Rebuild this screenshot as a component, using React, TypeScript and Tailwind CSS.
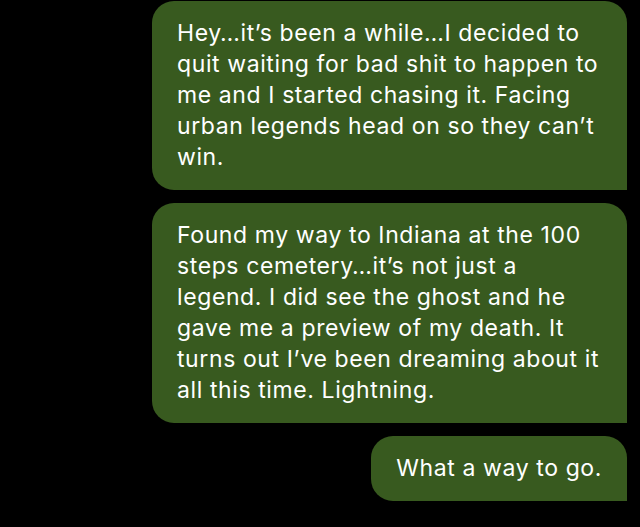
import React from 'react';

const messages: { id: number; lines: string[]; width: string }[] = [
  {
    id: 1,
    width: 'w-[475px]',
    lines: [
      'Hey…it’s been a while…I decided to',
      'quit waiting for bad shit to happen to',
      'me and I started chasing it. Facing',
      'urban legends head on so they can’t',
      'win.',
    ],
  },
  {
    id: 2,
    width: 'w-[475px]',
    lines: [
      'Found my way to Indiana at the 100',
      'steps cemetery…it’s not just a',
      'legend. I did see the ghost and he',
      'gave me a preview of my death. It',
      'turns out I’ve been dreaming about it',
      'all this time. Lightning.',
    ],
  },
  {
    id: 3,
    width: 'w-auto',
    lines: ['What a way to go.'],
  },
];

const App: React.FC = () => {
  return (
    <div className="min-h-[527px] w-[640px] bg-black pt-[1px] pr-[13px] font-['Inter','Noto_Sans',sans-serif]">
      <div className="flex flex-col items-end gap-[13px]">
        {messages.map((msg) => (
          <div
            key={msg.id}
            className={`${msg.width} rounded-[22px] rounded-br-none bg-[#385a1f] px-[25px] py-[17px] text-[23px] leading-[31px] tracking-[0.6px] text-white whitespace-nowrap`}
          >
            {msg.lines.map((line, i) => (
              <div key={i}>{line}</div>
            ))}
          </div>
        ))}
      </div>
    </div>
  );
};

export default App;
